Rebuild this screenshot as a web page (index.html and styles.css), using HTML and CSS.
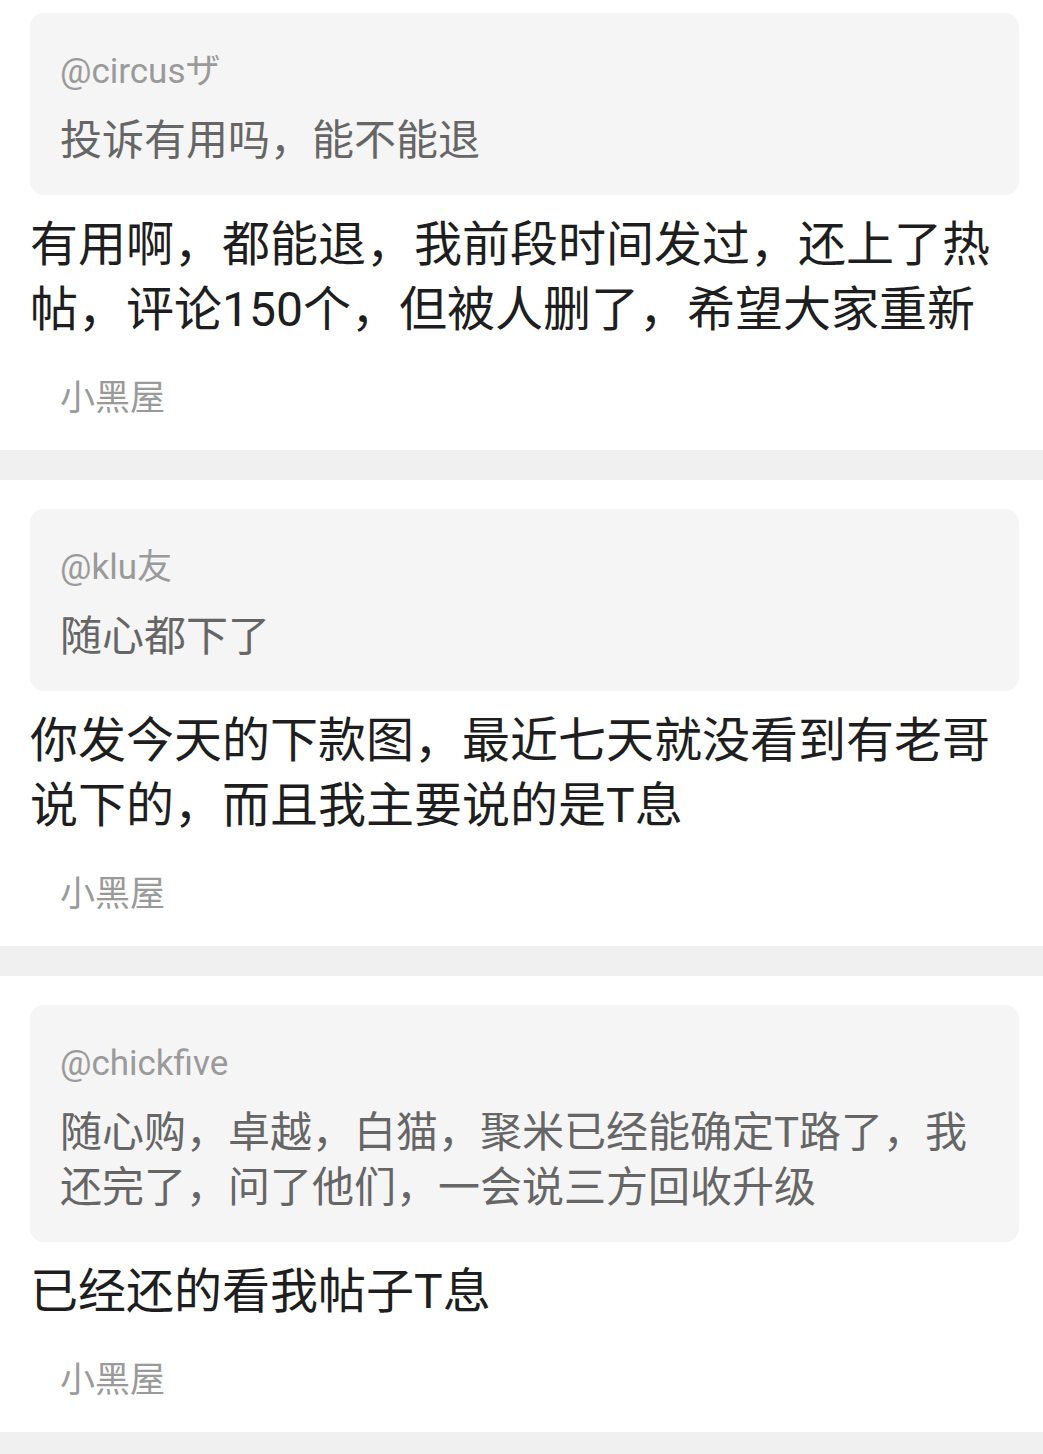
FILE: index.html
```html
<!DOCTYPE html>
<html lang="zh-CN">
<head>
<meta charset="utf-8">
<title>评论</title>
<link rel="stylesheet" href="styles.css">
</head>
<body>
<main class="feed">
  <article class="post">
    <div class="quote">
      <div class="quote-user">@circusザ</div>
      <div class="quote-text">投诉有用吗，能不能退</div>
    </div>
    <p class="post-text">有用啊，都能退，我前段时间发过，还上了热帖，评论150个，但被人删了，希望大家重新</p>
    <div class="post-tag">小黑屋</div>
  </article>
  <article class="post">
    <div class="quote">
      <div class="quote-user">@klu友</div>
      <div class="quote-text">随心都下了</div>
    </div>
    <p class="post-text">你发今天的下款图，最近七天就没看到有老哥说下的，而且我主要说的是T息</p>
    <div class="post-tag">小黑屋</div>
  </article>
  <article class="post">
    <div class="quote">
      <div class="quote-user">@chickfive</div>
      <div class="quote-text">随心购，卓越，白猫，聚米已经能确定T路了，我还完了，问了他们，一会说三方回收升级</div>
    </div>
    <p class="post-text">已经还的看我帖子T息</p>
    <div class="post-tag">小黑屋</div>
  </article>
</main>
</body>
</html>
```

FILE: styles.css
```css
html, body {
  margin: 0;
  padding: 0;
  background: #ffffff;
}

body {
  font-family: Roboto, "Noto Sans CJK SC", "Noto Sans", sans-serif;
  overflow: hidden;
}

.feed {
  margin-top: -16px;
  display: flex;
  flex-direction: column;
}

.post {
  padding: 29px 24px 27px 30px;
  border-bottom: 30px solid #f0f0f0;
  display: flex;
  flex-direction: column;
}

.quote {
  background: #f5f5f5;
  border-radius: 14px;
  padding: 37px 30px 27px 30px;
  display: flex;
  flex-direction: column;
  gap: 19px;
}

.quote-user {
  font-size: 35px;
  line-height: 44px;
  color: #9a9a9a;
}

.quote-text {
  font-size: 42px;
  line-height: 55px;
  color: #666666;
}

.post-text {
  margin: 17px 0 0 0;
  font-size: 48px;
  line-height: 65px;
  color: #1e1e1e;
}

.post-tag {
  margin-top: 33px;
  padding-left: 30px;
  font-size: 35px;
  line-height: 48px;
  color: #9a9a9a;
}
```
